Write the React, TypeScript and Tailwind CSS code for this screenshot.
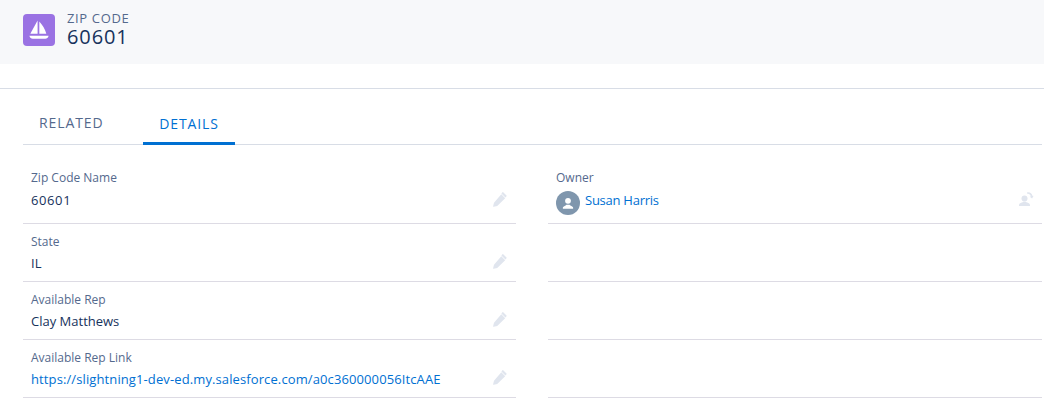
import type { ReactNode } from 'react';

function Pencil({ className }: { className?: string }) {
  return (
    <svg className={`w-[16px] h-[16px] shrink-0 text-[#e0e5ee] ${className ?? ''}`} viewBox="0 0 16 16" fill="currentColor">
      <path d="M11.200 1.200l3.300 3.300c.3.300.3.600 0 .8l-1.100 1.100-4-4 1.100-1.100c.2-.3.500-.3.700-.1zM9.300 3.300l3.900 3.900-7.700 7.500c-.1.100-.2.100-.3.200l-3.500.9c-.4.100-.7-.2-.6-.6l.9-3.500c.1-.1.100-.2.200-.3z" />
    </svg>
  );
}

function ChangeOwner() {
  return (
    <svg className="w-[16px] h-[16px] shrink-0 text-[#e0e5ee]" viewBox="0 0 16 16" fill="currentColor">
      <circle cx="6.500" cy="7.600" r="3" />
      <path d="M1 14.200c0-1.500 1.200-2.100 2.700-2.600.8-.3 1.200-.5 1.400-.8h2.800c.2.300.6.500 1.400.8 1.500.5 2.700 1.100 2.700 2.600v.8H1z" />
      <path d="M9 1.400c2.700-.6 5 .9 5.600 3.700l1-.3-1.500 2.700-2.400-1.800 1.100-.3c-.4-1.700-1.900-2.800-3.500-2.500z" />
    </svg>
  );
}

function Avatar() {
  return (
    <span className="w-6 h-6 rounded-full bg-[#7f96ad] flex items-center justify-center shrink-0">
      <svg className="w-4 h-4 text-white" viewBox="0 0 16 16" fill="currentColor">
        <circle cx="8" cy="5.800" r="2.900" />
        <path d="M2.800 13.200c0-1.500 1.100-2 2.300-2.500.8-.3 1.100-.5 1.300-.9h3.200c.2.400.5.600 1.300.9 1.200.5 2.300 1 2.300 2.500 0 .4-.3.600-.6.600H3.400c-.3 0-.6-.2-.6-.6z" />
      </svg>
    </span>
  );
}

function Field({ label, children, icon, first }: { label?: string; children?: ReactNode; icon?: ReactNode; first?: boolean }) {
  return (
    <div className={`border-b border-[#dddbe4] px-2 ${first ? 'h-[57px] pt-[2px]' : 'h-[58px] pt-[9px]'}`}>
      {label ? <div className="text-[12px] leading-[18px] text-[#54698d]">{label}</div> : null}
      {children ? (
        <div className={`flex items-start justify-between text-[13px] leading-[18px] text-[#16325c] ${first ? 'pt-1' : 'pt-[3px]'}`}>
          {children}
          {icon}
        </div>
      ) : null}
    </div>
  );
}

export default function App() {
  return (
    <div className="w-[1044px] h-[407px] overflow-hidden bg-white font-['Open_Sans','Liberation_Sans',sans-serif]">
      <header className="h-16 bg-[#f7f8fa] pl-[23px] flex items-start">
        <div className="w-8 h-8 mt-[14px] rounded-[4px] bg-[#9a72e3] flex items-center justify-center">
          <svg className="w-[26px] h-[26px] text-white" viewBox="0 0 24 24" fill="currentColor">
            <path d="M10.700 3.200v12.300H4.300c-.2 0-.3-.2-.2-.3zM12.300 4.200c2.800 3 5.300 7.100 6.400 11 .1.200-.1.300-.2.300h-6.200z" />
            <path d="M3.400 17.200h17.200c.2 0 .3.200.2.300-.5 1.600-1.500 2.500-3 2.500H6.200c-1.500 0-2.500-.9-3-2.500-.1-.1 0-.3.200-.3z" />
          </svg>
        </div>
        <div className="ml-3 pt-[10px]">
          <div className="text-[13px] leading-[16px] tracking-[0.65px] text-[#54698d]">ZIP CODE</div>
          <div className="text-[20px] leading-[21px] tracking-[0.9px] text-[#16325c]">60601</div>
        </div>
      </header>

      <div className="mt-6 border-t border-[#d8dde6] pl-[23px] pr-[2px]">
        <nav className="h-[56px] flex items-end border-b border-[#d8dde6] text-[14px] tracking-[0.9px]">
          <div className="w-[96px] h-[41px] pl-4 pt-[9px] text-[#54698d]">RELATED</div>
          <div className="ml-6 w-[92px] h-[43px] -mb-px pt-[11px] text-center text-[#0070d2] border-b-[3px] border-[#0070d2]">DETAILS</div>
        </nav>

        <div className="grid grid-cols-[493px_494px] gap-x-8 pt-[22px]">
          <div>
            <Field first label="Zip Code Name" icon={<Pencil />}>
              <span className="tracking-[0.6px]">60601</span>
            </Field>
            <Field label="State" icon={<Pencil className="-mt-px" />}>
              <span>IL</span>
            </Field>
            <Field label="Available Rep" icon={<Pencil className="-mt-px" />}>
              <span>Clay Matthews</span>
            </Field>
            <Field label="Available Rep Link" icon={<Pencil className="-mt-px" />}>
              <a className="text-[#0070d2] tracking-[0.11px]">https://slightning1-dev-ed.my.salesforce.com/a0c360000056ItcAAE</a>
            </Field>
          </div>
          <div>
            <Field first label="Owner" icon={<ChangeOwner />}>
              <span className="flex items-start gap-[5px] text-[#0070d2] tracking-[-0.25px]">
                <Avatar />
                Susan Harris
              </span>
            </Field>
            <Field />
            <Field />
            <Field />
          </div>
        </div>
      </div>
    </div>
  );
}
